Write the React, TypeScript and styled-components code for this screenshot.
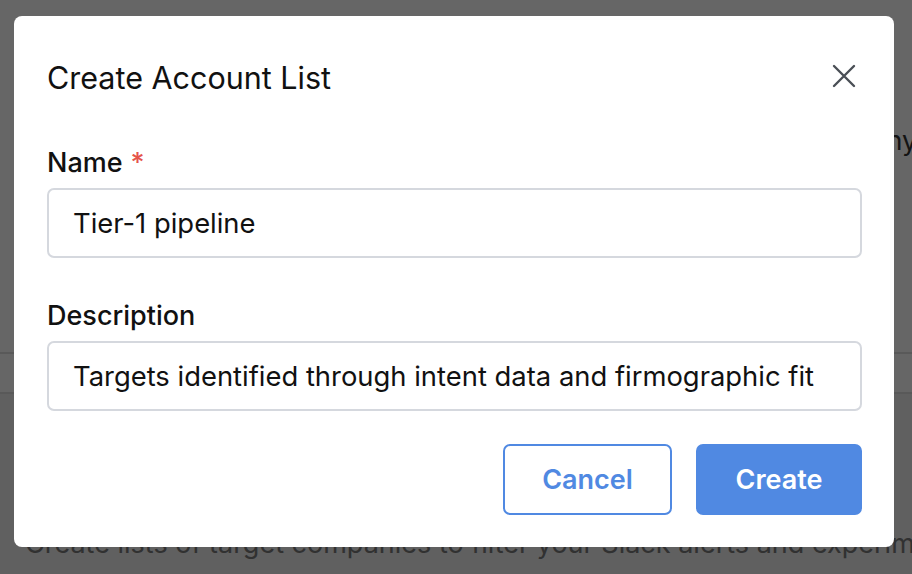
import React from "react";
import styled, { createGlobalStyle } from "styled-components";

const GlobalStyle = createGlobalStyle`
  html, body { margin: 0; padding: 0; }
  body {
    font-family: Inter, "Noto Sans", Arial, sans-serif;
    background: #ffffff;
    overflow: hidden;
  }
  * { box-sizing: border-box; }
`;

/* ---------- page behind the dialog ---------- */

const Page = styled.div`
  height: 100vh;
  display: flex;
  flex-direction: column;
  background: #ffffff;
  color: #222222;
`;

const PageTop = styled.section`
  height: 352px;
  padding-top: 124px;
  flex: 0 0 auto;
`;

const ToolbarRow = styled.div`
  display: flex;
  white-space: nowrap;
  padding-left: 795px;
  font-size: 27px;
  line-height: 34px;
  color: #333333;
`;

const TableHead = styled.div`
  height: 42px;
  border-top: 2px solid #dedede;
  border-bottom: 2px solid #dedede;
  flex: 0 0 auto;
`;

const PageBottom = styled.section`
  flex: 1 1 auto;
  background: #efefef;
  padding: 133px 0 0 25px;
`;

const Intro = styled.p`
  margin: 0;
  white-space: nowrap;
  font-size: 27px;
  line-height: 34px;
  color: #7a7a7a;
`;

/* ---------- dialog ---------- */

const Overlay = styled.div`
  position: fixed;
  inset: 0;
  background: rgba(0, 0, 0, 0.6);
  display: flex;
  justify-content: flex-start;
  align-items: flex-start;
  padding: 16px 0 0 14px;
`;

const Dialog = styled.div`
  width: 880px;
  background: #ffffff;
  border-radius: 8px;
  padding: 0 32px 32px 33px;
  display: flex;
  flex-direction: column;
`;

const Header = styled.div`
  height: 129px;
  padding-top: 42px;
  display: flex;
  justify-content: space-between;
  align-items: flex-start;
`;

const Title = styled.h2`
  margin: 0;
  font-size: 30.5px;
  line-height: 40px;
  font-weight: 400;
  color: #111111;
`;

const CloseButton = styled.button`
  width: 24px;
  height: 24px;
  margin: 6px 6px 0 0;
  padding: 0;
  border: none;
  background: none;
  color: #4a4f56;
  cursor: pointer;
  display: flex;
`;

const Form = styled.div`
  display: flex;
  flex-direction: column;
  gap: 40px;
`;

const Field = styled.label`
  display: flex;
  flex-direction: column;
  gap: 7px;
`;

const LabelText = styled.span`
  font-size: 27px;
  line-height: 36px;
  font-weight: 500;
  color: #111111;
`;

const Required = styled.span`
  color: #e5544b;
  margin-left: 8px;
`;

const TextInput = styled.input`
  height: 70px;
  width: 100%;
  border: 2px solid #d5d8de;
  border-radius: 7px;
  padding: 0 24px;
  font-family: inherit;
  font-size: 27.4px;
  color: #111111;
  background: #ffffff;
  outline: none;
`;

const Actions = styled.div`
  display: flex;
  justify-content: flex-end;
  gap: 24px;
  margin-top: 33px;
`;

const Button = styled.button<{ $primary?: boolean; $width: number }>`
  width: ${(p) => p.$width}px;
  height: 71px;
  border-radius: 7px;
  border: 2px solid #5089e2;
  background: ${(p) => (p.$primary ? "#5089e2" : "#ffffff")};
  color: ${(p) => (p.$primary ? "#ffffff" : "#5089e2")};
  font-family: inherit;
  font-size: 27px;
  font-weight: 600;
  cursor: pointer;
`;

const CloseIcon = () => (
  <svg width="24" height="24" viewBox="0 0 24 24" fill="none">
    <path
      d="M2 2 L22 22 M22 2 L2 22"
      stroke="currentColor"
      strokeWidth="2.4"
      strokeLinecap="round"
    />
  </svg>
);

export default function App() {
  return (
    <>
      <GlobalStyle />
      <Page>
        <PageTop>
          <ToolbarRow>Company</ToolbarRow>
        </PageTop>
        <TableHead />
        <PageBottom>
          <Intro>
            Create lists of target companies to filter your Slack alerts and experiments.
          </Intro>
        </PageBottom>
      </Page>
      <Overlay>
        <Dialog role="dialog" aria-modal="true">
          <Header>
            <Title>Create Account List</Title>
            <CloseButton aria-label="Close">
              <CloseIcon />
            </CloseButton>
          </Header>
          <Form>
            <Field>
              <LabelText>
                Name<Required>*</Required>
              </LabelText>
              <TextInput defaultValue="Tier-1 pipeline" />
            </Field>
            <Field>
              <LabelText>Description</LabelText>
              <TextInput defaultValue="Targets identified through intent data and firmographic fit" />
            </Field>
          </Form>
          <Actions>
            <Button $width={169}>Cancel</Button>
            <Button $primary $width={166}>
              Create
            </Button>
          </Actions>
        </Dialog>
      </Overlay>
    </>
  );
}
